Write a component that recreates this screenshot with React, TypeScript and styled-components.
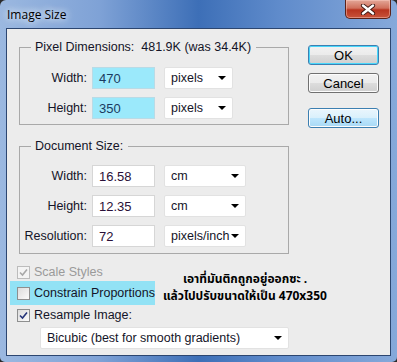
import styled, { createGlobalStyle } from "styled-components";

/* --- global --- */

const Global = createGlobalStyle`
  html, body {
    margin: 0;
    padding: 0;
    background: #2b2b2b;
  }
  body {
    font-family: "Liberation Sans", Tahoma, sans-serif;
  }
`;

/* --- window frame --- */

const Window = styled.div`
  width: 397px;
  height: 362px;
  box-sizing: border-box;
  display: flex;
  flex-direction: column;
  padding: 0 6px 6px 6px;
  border-radius: 6px 6px 5px 5px;
  background: linear-gradient(
    90deg,
    #9bb8e0 0%,
    #7fa2d6 25%,
    #3d6fb7 50%,
    #5f8bcb 70%,
    #86a9da 100%
  );
  overflow: hidden;
`;

const TitleBar = styled.div`
  height: 28px;
  flex: none;
  display: flex;
  align-items: flex-start;
  justify-content: space-between;
`;

const Title = styled.div`
  margin-top: 7px;
  margin-left: 1px;
  font-family: "Open Sans", "Noto Sans", sans-serif;
  font-size: 12px;
  line-height: 16px;
  color: #000;
  text-shadow: 0 0 6px #e8f0fa, 0 0 10px #e8f0fa;
`;

const CloseButton = styled.div`
  width: 46px;
  height: 19px;
  box-sizing: border-box;
  display: flex;
  align-items: center;
  justify-content: center;
  border: 1px solid #5b2219;
  border-top: none;
  border-radius: 0 0 5px 5px;
  background: linear-gradient(
    180deg,
    #e3a798 0%,
    #d0705c 45%,
    #b8341f 55%,
    #c8533b 100%
  );
  box-shadow: inset 0 0 0 1px rgba(255, 210, 200, 0.45);
`;

const Client = styled.div`
  flex: 1;
  display: grid;
  grid-template-columns: 282px 1fr;
  background: #ececec;
  border: 1px solid #2c4670;
  font-size: 12.5px;
  color: #141428;
`;

/* --- left column --- */

const LeftCol = styled.div`
  display: flex;
  flex-direction: column;
  padding-left: 12px;
  padding-top: 11px;
`;

const Group = styled.fieldset<{ $gap: number }>`
  margin: 0 0 ${({ $gap }) => $gap}px 0;
  padding: 0 0 ${({ $gap }) => ($gap > 12 ? 5 : 6)}px 0;
  width: 270px;
  box-sizing: border-box;
  border: 1px solid #a9a9a9;
  border-radius: 0;
  min-width: 0;
`;

const Legend = styled.legend`
  margin-left: 11px;
  padding: 0 5px 0 4px;
  line-height: 14px;
  font-size: 12.5px;
  white-space: pre;
`;

const Rows = styled.div<{ $top: number }>`
  display: grid;
  grid-template-columns: 67px 68px auto;
  row-gap: 8px;
  align-items: center;
  padding-top: ${({ $top }) => $top}px;
`;

const Label = styled.div`
  text-align: right;
  white-space: nowrap;
`;

const Field = styled.div<{ $hl?: boolean }>`
  margin-left: 5px;
  height: 22px;
  box-sizing: border-box;
  display: flex;
  align-items: center;
  padding-left: 6px;
  font-size: 13px;
  background: ${({ $hl }) => ($hl ? "#9be9fb" : "#ffffff")};
  border: 1px solid ${({ $hl }) => ($hl ? "#b9dbe6" : "#d6d6d6")};
  color: ${({ $hl }) => ($hl ? "#1a3a60" : "#2a1038")};
`;

const Select = styled.div<{ $w: number; $ml?: number }>`
  margin-left: ${({ $ml }) => $ml ?? 9}px;
  width: ${({ $w }) => $w}px;
  height: 22px;
  box-sizing: border-box;
  display: flex;
  align-items: center;
  justify-content: space-between;
  padding: 0 6px 0 6px;
  background: #fff;
  border: 1px solid #e2e2e2;
  border-radius: 2px;
  font-size: 12.5px;
  color: #141428;
  white-space: nowrap;
`;

const Arrow = styled.span`
  flex: none;
  width: 0;
  height: 0;
  border-left: 4px solid transparent;
  border-right: 4px solid transparent;
  border-top: 4px solid #000;
`;

/* --- check boxes --- */

const Options = styled.div`
  display: flex;
  margin-left: -9px;
`;

const CheckList = styled.div`
  display: flex;
  flex-direction: column;
  width: 145px;
`;

const CheckRow = styled.div<{ $hl?: boolean; $muted?: boolean }>`
  display: flex;
  align-items: center;
  gap: 4px;
  height: ${({ $hl }) => ($hl ? 24 : 14)}px;
  padding-left: 7px;
  margin: ${({ $hl }) => ($hl ? "2px 0 3px" : "0")};
  background: ${({ $hl }) => ($hl ? "#92e2f5" : "transparent")};
  color: ${({ $muted }) => ($muted ? "#9a9a9a" : "#141428")};
  white-space: nowrap;
  font-size: 12.5px;
`;

const Box = styled.span<{ $muted?: boolean }>`
  width: 13px;
  height: 13px;
  box-sizing: border-box;
  flex: none;
  display: flex;
  align-items: center;
  justify-content: center;
  border: 1px solid ${({ $muted }) => ($muted ? "#bcbcbc" : "#8e8f8f")};
  background: ${({ $muted }) =>
    $muted ? "#f4f4f4" : "linear-gradient(135deg, #dcdcdc, #fbfbfb)"};
`;

const Note = styled.div`
  padding-top: 6px;
  font-family: "Noto Sans Thai", "Liberation Sans", Tahoma, sans-serif;
  font-weight: bold;
  font-size: 12px;
  line-height: 17px;
  color: #000;
  white-space: pre;
`;

const NoteLine = styled.div<{ $indent: number }>`
  padding-left: ${({ $indent }) => $indent}px;
`;

const Resample = styled.div`
  margin-top: 5px;
  margin-left: 21px;
  display: flex;
`;

/* --- right column --- */

const RightCol = styled.div`
  display: flex;
  flex-direction: column;
  align-items: flex-start;
  padding-top: 16px;
  padding-left: 19px;
`;

const Button = styled.div<{ $kind?: "default" | "hot" }>`
  width: 71px;
  height: 20px;
  box-sizing: border-box;
  margin-bottom: ${({ $kind }) => ($kind === "default" ? 8 : 15)}px;
  display: flex;
  align-items: center;
  justify-content: center;
  font-size: 13px;
  color: #000;
  border-radius: 3px;
  border: 1px solid
    ${({ $kind }) => ($kind ? "#3c7fb1" : "#707070")};
  background: ${({ $kind }) =>
    $kind === "hot"
      ? "linear-gradient(180deg, #eaf6fd 0%, #d9f0fc 50%, #bee6fd 51%, #a7d9f5 100%)"
      : "linear-gradient(180deg, #f2f2f2 0%, #ebebeb 50%, #dddddd 51%, #cfcfcf 100%)"};
  box-shadow: ${({ $kind }) =>
    $kind === "default" ? "inset 0 0 0 1px #48d7fb" : "inset 0 0 0 1px #fcfcfc"};
`;

/* --- pieces --- */

function Check({ muted, on }: { muted?: boolean; on?: boolean }) {
  return (
    <Box $muted={muted}>
      {on && (
        <svg width="9" height="9" viewBox="0 0 9 9">
          <path
            d="M1 4.5 L3.5 7 L8 1.5"
            fill="none"
            stroke={muted ? "#a8a8a8" : "#26357a"}
            strokeWidth="1.6"
          />
        </svg>
      )}
    </Box>
  );
}

function Drop({ w, ml, children }: { w: number; ml?: number; children: string }) {
  return (
    <Select $w={w} $ml={ml}>
      <span>{children}</span>
      <Arrow />
    </Select>
  );
}

export default function App() {
  return (
    <>
      <Global />
      <Window>
        <TitleBar>
          <Title>Image Size</Title>
          <CloseButton>
            <svg width="16" height="11" viewBox="0 0 16 11">
              <path
                d="M3 1.5 L13 9.5 M13 1.5 L3 9.5"
                stroke="#3a1510"
                strokeWidth="4.2"
                strokeLinecap="round"
              />
              <path
                d="M3 1.5 L13 9.5 M13 1.5 L3 9.5"
                stroke="#ffffff"
                strokeWidth="2.4"
                strokeLinecap="round"
              />
            </svg>
          </CloseButton>
        </TitleBar>

        <Client>
          <LeftCol>
            <Group $gap={14}>
              <Legend>{"Pixel Dimensions:  481.9K (was 34.4K)"}</Legend>
              <Rows $top={13}>
                <Label>Width:</Label>
                <Field $hl>470</Field>
                <Drop w={69}>pixels</Drop>
                <Label>Height:</Label>
                <Field $hl>350</Field>
                <Drop w={69}>pixels</Drop>
              </Rows>
            </Group>

            <Group $gap={11}>
              <Legend>Document Size:</Legend>
              <Rows $top={12}>
                <Label>Width:</Label>
                <Field>16.58</Field>
                <Drop w={82}>cm</Drop>
                <Label>Height:</Label>
                <Field>12.35</Field>
                <Drop w={82}>cm</Drop>
                <Label>Resolution:</Label>
                <Field>72</Field>
                <Drop w={82}>pixels/inch</Drop>
              </Rows>
            </Group>

            <Options>
              <CheckList>
                <CheckRow $muted>
                  <Check muted on />
                  Scale Styles
                </CheckRow>
                <CheckRow $hl>
                  <Check />
                  Constrain Proportions
                </CheckRow>
                <CheckRow>
                  <Check on />
                  Resample Image:
                </CheckRow>
              </CheckList>
              <Note>
                <NoteLine $indent={28}>เอาที่มันติกถูกอยู่ออกซะ .</NoteLine>
                <NoteLine $indent={8}>แล้วไปปรับขนาดให้เป็น 470x350</NoteLine>
              </Note>
            </Options>

            <Resample>
              <Drop w={251} ml={0}>
                Bicubic (best for smooth gradients)
              </Drop>
            </Resample>
          </LeftCol>

          <RightCol>
            <Button $kind="default">OK</Button>
            <Button>Cancel</Button>
            <Button $kind="hot">Auto...</Button>
          </RightCol>
        </Client>
      </Window>
    </>
  );
}
